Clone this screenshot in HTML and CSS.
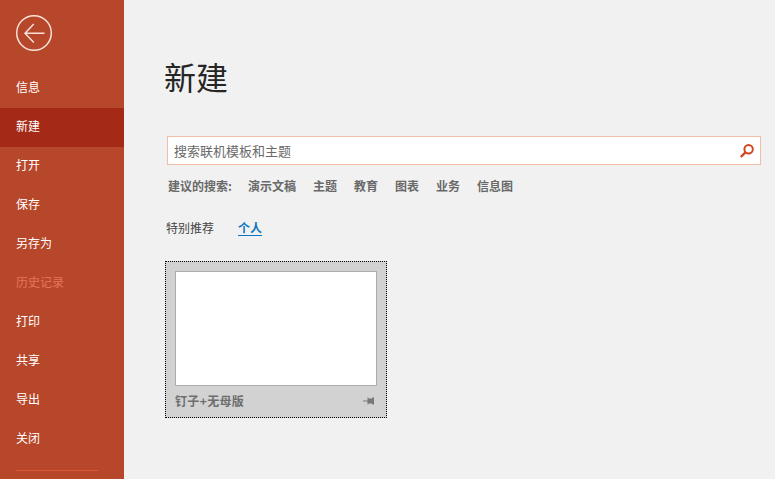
FILE: index.html
```html
<!DOCTYPE html>
<html lang="zh-CN">
<head>
<meta charset="utf-8">
<title>新建</title>
<link rel="stylesheet" href="styles.css">
</head>
<body>
<div class="app">
  <nav class="side">
    <div class="back-wrap">
      <svg class="back" width="38" height="38" viewBox="0 0 38 38" fill="none" stroke="#f8e2d9">
        <circle cx="19" cy="19" r="17.3" stroke-width="1.5"/>
        <path d="M10 19.2H29.5M18.8 10L10 19.2L18.8 28.4" stroke-width="1.5"/>
      </svg>
    </div>
    <ul class="menu">
      <li>信息</li>
      <li class="active">新建</li>
      <li>打开</li>
      <li>保存</li>
      <li>另存为</li>
      <li class="disabled">历史记录</li>
      <li>打印</li>
      <li>共享</li>
      <li>导出</li>
      <li>关闭</li>
    </ul>
    <div class="rule"></div>
  </nav>
  <main class="main">
    <h1 class="title">新建</h1>
    <div class="search">
      <span class="placeholder">搜索联机模板和主题</span>
      <svg class="mag" width="16" height="16" viewBox="0 0 16 16" fill="none" stroke="#d2461e">
        <circle cx="9.6" cy="6.2" r="4.2" stroke-width="2"/>
        <path d="M6.4 9.4L1.8 14" stroke-width="2.4"/>
      </svg>
    </div>
    <div class="suggest">
      <span class="label">建议的搜索:</span>
      <span>演示文稿</span><span>主题</span><span>教育</span><span>图表</span><span>业务</span><span>信息图</span>
    </div>
    <div class="tabs">
      <span class="tab">特别推荐</span>
      <span class="tab current">个人</span>
    </div>
    <div class="card">
      <div class="thumb"></div>
      <div class="card-foot">
        <span class="card-name">钉子+无母版</span>
        <svg class="pin" width="12" height="10" viewBox="0 0 12 10" fill="#777">
          <path d="M0 4.5H5V5.5H0Z"/>
          <path d="M4.5 1.5H5.5V2.6H9V1.5H11V8.5H9V7.4H5.5V8.5H4.5Z"/>
        </svg>
      </div>
    </div>
  </main>
</div>
</body>
</html>
```
FILE: styles.css
```css
* { box-sizing: border-box; }
html, body {
  margin: 0;
  height: 100%;
  overflow: hidden;
}
body {
  font-family: "Noto Sans CJK SC", "Liberation Sans", sans-serif;
  background: #f1f1f1;
}
.app {
  display: flex;
  height: 479px;
  overflow: hidden;
}
.side {
  width: 124px;
  flex: none;
  background: #b7472a;
  color: #fff;
}
.back-wrap {
  padding: 14px 0 0 15px;
  height: 69px;
}
.back { display: block; }
.menu {
  list-style: none;
  margin: 0;
  padding: 0;
}
.menu li {
  height: 39px;
  line-height: 36px;
  padding-left: 16px;
  font-size: 12px;
}
.menu li.active { background: #a42a17; }
.menu li.disabled { color: #e3765c; }
.rule {
  height: 1px;
  width: 82px;
  margin: 11px 0 0 16px;
  background: #d9583a;
}
.main {
  flex: 1;
  padding: 0 14px 0 40px;
  min-width: 0;
}
.title {
  margin: 0;
  padding-top: 52px;
  height: 136px;
  font-size: 32px;
  line-height: 48px;
  font-weight: 400;
  color: #262626;
}
.search {
  margin-left: 3px;
  width: 594px;
  height: 29px;
  background: #fff;
  border: 1px solid #f2bfa6;
  display: flex;
  align-items: center;
  justify-content: space-between;
  padding: 0 5px 0 6px;
}
.placeholder {
  font-size: 13px;
  color: #6a6a6a;
}
.mag { display: block; }
.suggest {
  display: flex;
  gap: 17px;
  margin: 12px 0 0 4px;
  height: 18px;
  line-height: 18px;
  font-size: 12px;
  font-weight: 700;
  color: #696969;
}
.suggest .label { margin-right: -1px; }
.tabs {
  display: flex;
  gap: 24px;
  margin: 23px 0 0 2px;
  height: 20px;
  line-height: 20px;
  font-size: 12px;
  color: #444;
}
.tab.current {
  color: #0f73bf;
  font-weight: 700;
  text-decoration: underline;
  text-underline-offset: 2px;
}
.card {
  margin: 23px 0 0 1px;
  width: 222px;
  height: 157px;
  background: #d2d2d2;
  border: 1px dotted #000;
  padding: 9px 9px 0;
}
.thumb {
  height: 115px;
  background: #fff;
  border: 1px solid #acacac;
}
.card-foot {
  display: flex;
  align-items: center;
  justify-content: space-between;
  height: 29px;
  padding-right: 2px;
}
.card-name {
  font-size: 12px;
  font-weight: 700;
  letter-spacing: 0.35px;
  color: #6e6e6e;
}
.pin { display: block; }
```
